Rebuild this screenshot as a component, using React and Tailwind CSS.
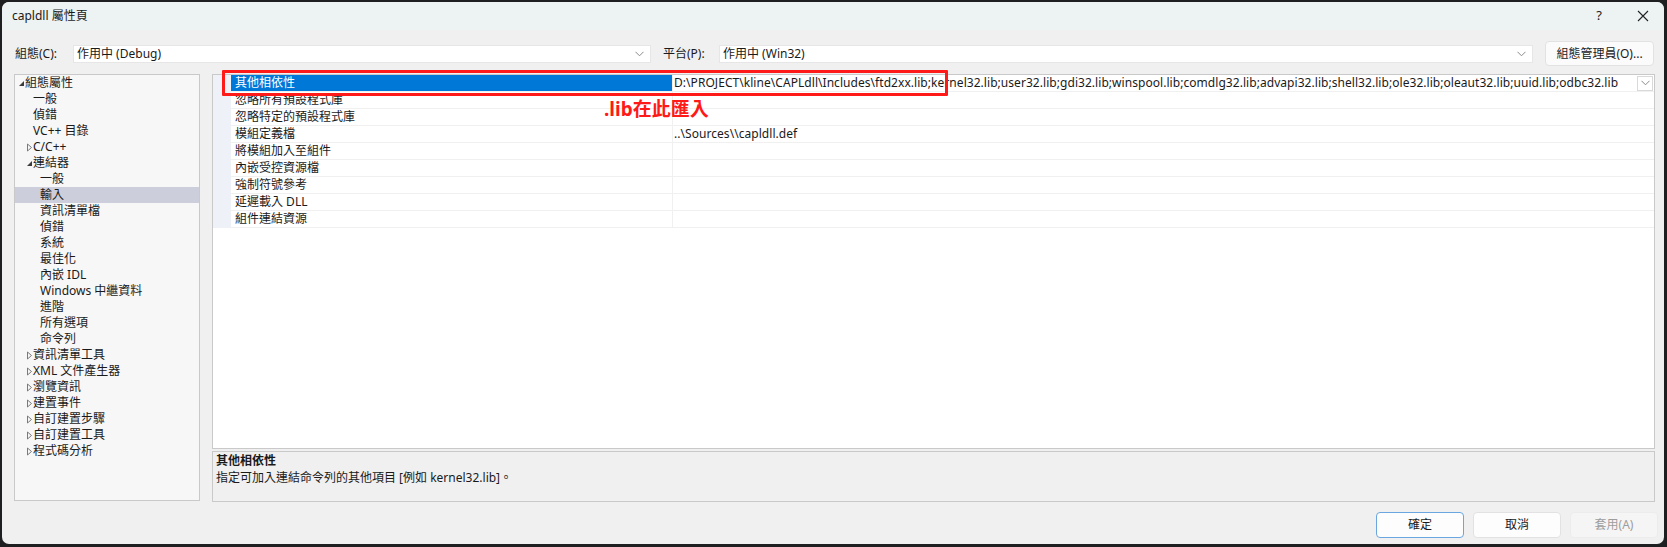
import React from 'react';

const FONT = "font-['Noto_Sans','Noto_Sans_CJK_TC',sans-serif]";

// tree rows: pad sets the indent, kind = 'open' | 'closed' | 'leaf'
const treeItems = [
    { label: '組態屬性', kind: 'open', pad: 'w-[3px]' },
    { label: '一般', kind: 'leaf', pad: 'w-[11px]' },
    { label: '偵錯', kind: 'leaf', pad: 'w-[11px]' },
    { label: 'VC++ 目錄', kind: 'leaf', pad: 'w-[11px]' },
    { label: 'C/C++', kind: 'closed', pad: 'w-[11px]' },
    { label: '連結器', kind: 'open', pad: 'w-[11px]' },
    { label: '一般', kind: 'leaf', pad: 'w-[18px]' },
    { label: '輸入', kind: 'leaf', pad: 'w-[18px]', selected: true },
    { label: '資訊清單檔', kind: 'leaf', pad: 'w-[18px]' },
    { label: '偵錯', kind: 'leaf', pad: 'w-[18px]' },
    { label: '系統', kind: 'leaf', pad: 'w-[18px]' },
    { label: '最佳化', kind: 'leaf', pad: 'w-[18px]' },
    { label: '內嵌 IDL', kind: 'leaf', pad: 'w-[18px]' },
    { label: 'Windows 中繼資料', kind: 'leaf', pad: 'w-[18px]' },
    { label: '進階', kind: 'leaf', pad: 'w-[18px]' },
    { label: '所有選項', kind: 'leaf', pad: 'w-[18px]' },
    { label: '命令列', kind: 'leaf', pad: 'w-[18px]' },
    { label: '資訊清單工具', kind: 'closed', pad: 'w-[11px]' },
    { label: 'XML 文件產生器', kind: 'closed', pad: 'w-[11px]' },
    { label: '瀏覽資訊', kind: 'closed', pad: 'w-[11px]' },
    { label: '建置事件', kind: 'closed', pad: 'w-[11px]' },
    { label: '自訂建置步驟', kind: 'closed', pad: 'w-[11px]' },
    { label: '自訂建置工具', kind: 'closed', pad: 'w-[11px]' },
    { label: '程式碼分析', kind: 'closed', pad: 'w-[11px]' },
];

const LIBS =
    'D:\\PROJECT\\kline\\CAPLdll\\Includes\\ftd2xx.lib;kernel32.lib;user32.lib;gdi32.lib;winspool.lib;comdlg32.lib;advapi32.lib;shell32.lib;ole32.lib;oleaut32.lib;uuid.lib;odbc32.lib';

const props = [
    { name: '其他相依性', value: LIBS, selected: true },
    { name: '忽略所有預設程式庫', value: '' },
    { name: '忽略特定的預設程式庫', value: '' },
    { name: '模組定義檔', value: '..\\Sources\\\\capldll.def' },
    { name: '將模組加入至組件', value: '' },
    { name: '內嵌受控資源檔', value: '' },
    { name: '強制符號參考', value: '' },
    { name: '延遲載入 DLL', value: '' },
    { name: '組件連結資源', value: '' },
];

const Chevron = ({ className }) => (
    <svg width="9" height="6" viewBox="0 0 9 6" className={className}>
        <polyline points="0.5,0.8 4.5,4.8 8.5,0.8" fill="none" stroke="currentColor" strokeWidth="1" />
    </svg>
);

const Expander = ({ kind }) => {
    if (kind === 'open') {
        return (
            <svg width="7" height="7" viewBox="0 0 7 7">
                <polygon points="6,1 6,6 1,6" fill="#3b3b3b" />
            </svg>
        );
    }
    if (kind === 'closed') {
        return (
            <svg width="7" height="9" viewBox="0 0 7 9">
                <polygon points="1.5,1 5.5,4.5 1.5,8" fill="none" stroke="#7a7a7a" strokeWidth="1" />
            </svg>
        );
    }
    return null;
};

const App = () => {
    return (
        <div className={`w-[1667px] h-[547px] bg-[#1d1f20] pt-[2px] pl-[2px] ${FONT} text-[12px] text-[#1a1a1a]`}>
            <div className="w-[1662px] h-[542px] bg-[#f0f0f0] rounded-[7px] overflow-hidden flex flex-col">
                {/* Title bar */}
                <div className="h-[28px] shrink-0 flex items-center bg-[#edf2f2] pl-[10px]">
                    <span className="leading-[16px]">capldll 屬性頁</span>
                    <div className="ml-auto flex items-center">
                        <span className="text-[13px] text-[#222] mr-[35px]">?</span>
                        <svg width="12" height="12" viewBox="0 0 12 12" className="mr-[15px]">
                            <path d="M1 1 L11 11 M11 1 L1 11" stroke="#222" strokeWidth="1.1" />
                        </svg>
                    </div>
                </div>

                {/* Configuration row */}
                <div className="mt-[11px] h-[25px] shrink-0 flex items-center pl-[13px] pr-[8px]">
                    <span className="w-[58px] shrink-0 leading-[16px]">組態(C):</span>
                    <div className="w-[578px] shrink-0 h-[18px] bg-white border border-[#e6e6e6] flex items-center pl-[3px] pr-[6px]">
                        <span>作用中 (Debug)</span>
                        <Chevron className="ml-auto text-[#8a8a8a]" />
                    </div>
                    <span className="ml-[12px] w-[56px] shrink-0 leading-[16px]">平台(P):</span>
                    <div className="w-[814px] shrink-0 h-[18px] bg-white border border-[#e6e6e6] flex items-center pl-[3px] pr-[6px]">
                        <span>作用中 (Win32)</span>
                        <Chevron className="ml-auto text-[#8a8a8a]" />
                    </div>
                    <button className="ml-[12px] w-[109px] shrink-0 h-[25px] bg-[#fbfbfb] border border-[#e2e2e2] rounded-[4px] text-[#1a1a1a]">
                        組態管理員(O)...
                    </button>
                </div>

                {/* Main area */}
                <div className="mt-[8px] h-[428px] shrink-0 flex pl-[12px] pr-[9px]">
                    {/* Tree */}
                    <div className="w-[186px] shrink-0 h-[427px] bg-[#f7f7f7] border border-[#c9c9c9]">
                        {treeItems.map((item, i) => (
                            <div
                                key={i}
                                className={`h-[16px] flex items-center ${item.selected ? 'bg-[#cccedb]' : ''}`}
                            >
                                <span className={`${item.pad} shrink-0`} />
                                <span className="w-[7px] shrink-0 flex items-center">
                                    <Expander kind={item.kind} />
                                </span>
                                <span className="leading-[16px] whitespace-nowrap">{item.label}</span>
                            </div>
                        ))}
                    </div>

                    {/* Right column */}
                    <div className="ml-[12px] flex-1 min-w-0 flex flex-col">
                        <div className="relative h-[375px] bg-white border border-[#c9c9c9]">
                            {props.map((p, i) => (
                                <div key={i} className="h-[17px] flex">
                                    <div className="w-[18px] shrink-0 bg-[#eef2f8]" />
                                    <div
                                        className={`w-[441px] shrink-0 border-b border-[#f0f0f0] pl-[4px] flex items-center ${
                                            p.selected ? 'bg-[#0078d7] text-white' : ''
                                        }`}
                                    >
                                        <span className="leading-[16px]">{p.name}</span>
                                    </div>
                                    <div className="flex-1 min-w-0 border-l border-b border-[#f0f0f0] flex items-center pl-[1px]">
                                        <span className="leading-[16px] whitespace-nowrap overflow-hidden flex-1 min-w-0 tracking-[0.05px]">
                                            {p.value}
                                        </span>
                                        {p.selected && (
                                            <span className="w-[16px] h-[15px] shrink-0 mr-[1px] bg-white border border-[#d9d9d9] flex items-center justify-center">
                                                <Chevron className="text-[#8a8a8a]" />
                                            </span>
                                        )}
                                    </div>
                                </div>
                            ))}

                            {/* annotation overlay */}
                            <div className="absolute left-[9px] top-[-5px] w-[726px] h-[26px] border-[3px] border-[#ff1a1a] rounded-[1px] pointer-events-none" />
                            <div className="absolute left-[391px] top-[23px] text-[19px] leading-[22px] font-bold text-[#ff1a1a] whitespace-nowrap">
                                .lib在此匯入
                            </div>
                        </div>

                        {/* Description */}
                        <div className="mt-[2px] h-[51px] border border-[#c9c9c9] bg-[#f0f0f0] pl-[3px] pt-[1px]">
                            <div className="font-bold leading-[16px]">其他相依性</div>
                            <div className="mt-[1px] leading-[16px]">指定可加入連結命令列的其他項目 [例如 kernel32.lib]。</div>
                        </div>
                    </div>
                </div>

                {/* Footer buttons */}
                <div className="mt-[10px] h-[26px] shrink-0 flex justify-end gap-[9px] pr-[6px]">
                    <button className="w-[88px] h-[26px] bg-[#fdfdfd] border border-[#6aa6df] rounded-[4px] text-[#1a1a1a]">確定</button>
                    <button className="w-[88px] h-[26px] bg-[#fdfdfd] border border-[#e2e2e2] rounded-[4px] text-[#1a1a1a]">取消</button>
                    <button className="w-[88px] h-[26px] bg-[#f5f5f5] border border-[#ececec] rounded-[4px] text-[#9d9d9d]">套用(A)</button>
                </div>
            </div>
        </div>
    );
};

export default App;
